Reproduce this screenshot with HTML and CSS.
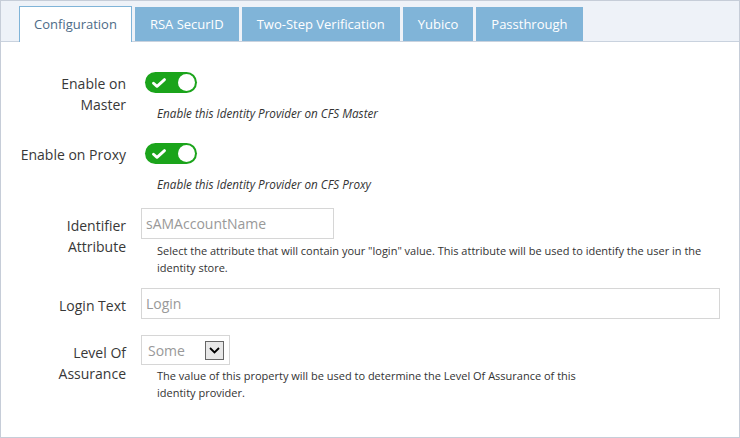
FILE: index.html
```html
<!DOCTYPE html>
<html lang="en">
<head>
<meta charset="utf-8">
<title>Configuration</title>
<link rel="stylesheet" href="styles.css">
</head>
<body>
<div class="frame">
  <div class="tabs">
    <div class="tab active">Configuration</div>
    <div class="tab">RSA SecurID</div>
    <div class="tab">Two-Step Verification</div>
    <div class="tab">Yubico</div>
    <div class="tab">Passthrough</div>
  </div>
  <div class="form">
    <div class="row row-master">
      <div class="label label-toggle">Enable on Master</div>
      <div class="control">
        <div class="toggle">
          <svg class="check" width="14" height="10" viewBox="0 0 14 10"><path d="M1.5 5.2 L5 8.4 L12.5 1.6" fill="none" stroke="#fff" stroke-width="2.8" stroke-linecap="round" stroke-linejoin="round"/></svg>
          <span class="knob"></span>
        </div>
        <div class="help italic">Enable this Identity Provider on CFS Master</div>
      </div>
    </div>
    <div class="row row-proxy">
      <div class="label label-toggle">Enable on Proxy</div>
      <div class="control">
        <div class="toggle">
          <svg class="check" width="14" height="10" viewBox="0 0 14 10"><path d="M1.5 5.2 L5 8.4 L12.5 1.6" fill="none" stroke="#fff" stroke-width="2.8" stroke-linecap="round" stroke-linejoin="round"/></svg>
          <span class="knob"></span>
        </div>
        <div class="help italic">Enable this Identity Provider on CFS Proxy</div>
      </div>
    </div>
    <div class="row row-ident">
      <div class="label">Identifier Attribute</div>
      <div class="control">
        <div class="input input-short"><span class="placeholder">sAMAccountName</span></div>
        <div class="help desc">Select the attribute that will contain your "login" value. This attribute will be used to identify the user in the identity store.</div>
      </div>
    </div>
    <div class="row row-login">
      <div class="label">Login Text</div>
      <div class="control">
        <div class="input input-wide"><span class="placeholder">Login</span></div>
      </div>
    </div>
    <div class="row row-loa">
      <div class="label">Level Of Assurance</div>
      <div class="control">
        <div class="select">
          <span class="placeholder">Some</span>
          <span class="select-btn"><svg width="11" height="7" viewBox="0 0 11 7"><path d="M1 1 L5.5 5.5 L10 1" fill="none" stroke="#000" stroke-width="1.8"/></svg></span>
        </div>
        <div class="help desc desc-narrow">The value of this property will be used to determine the Level Of Assurance of this identity provider.</div>
      </div>
    </div>
  </div>
</div>
</body>
</html>
```
FILE: styles.css
```css
* { box-sizing: border-box; }
html, body { margin: 0; padding: 0; background: #fff; }
body { font-family: "Open Sans", "Liberation Sans", sans-serif; color: #333; }

.frame {
  width: 740px;
  height: 438px;
  border: 1px solid #c6cdd8;
  background: #fff;
}

.tabs {
  display: flex;
  align-items: flex-end;
  gap: 3px;
  height: 41px;
  padding-left: 18px;
  background: #eef2f8;
  border-bottom: 1px solid #c9d2de;
}

.tab {
  height: 34px;
  line-height: 34px;
  padding: 0 15px;
  font-size: 13px;
  background: #80b4d8;
  color: #fff;
  white-space: nowrap;
}

.tab.active {
  height: 36px;
  line-height: 34px;
  margin-bottom: -1px;
  background: #fff;
  color: #4d6b87;
  border: 1px solid #80b4d8;
  border-bottom: none;
  padding: 0 14px;
}

.form {
  padding: 0 19px 0 16px;
}

.row {
  display: grid;
  grid-template-columns: 109px 1fr;
  column-gap: 15px;
  align-items: start;
}

.row-master { margin-top: 30px; }
.row-proxy { margin-top: 21px; }
.row-ident { margin-top: 15px; }
.row-login { margin-top: 12px; }
.row-loa { margin-top: 16px; }

.label {
  font-size: 14px;
  line-height: 21px;
  text-align: right;
  color: #383838;
  padding-top: 7px;
}
.label.label-toggle { padding-top: 1px; }

.control { min-width: 0; }

.toggle {
  position: relative;
  width: 52px;
  height: 21px;
  margin-left: 4px;
  border-radius: 11px;
  background: #1ba41b;
}
.toggle .check {
  position: absolute;
  left: 7px;
  top: 6px;
}
.toggle .knob {
  position: absolute;
  right: 2px;
  top: 2px;
  width: 17px;
  height: 17px;
  border-radius: 50%;
  background: #fff;
}

.help {
  margin-left: 16px;
  font-size: 11px;
  line-height: 17px;
  color: #333;
}
.help.italic {
  font-style: italic;
  font-size: 11.7px;
  margin-top: 12px;
}
.help.desc { margin-top: 3px; }
.help.desc-narrow { max-width: 440px; margin-top: 2px; }

.input {
  height: 31px;
  border: 1px solid #d6d6d6;
  padding-left: 4px;
  display: flex;
  align-items: center;
  background: #fff;
}
.input-short { width: 193px; }
.input-wide { width: 100%; }

.placeholder {
  font-size: 14px;
  color: #999;
}

.select {
  width: 89px;
  height: 30px;
  border: 1px solid #d6d6d6;
  padding-left: 6px;
  padding-right: 5px;
  display: flex;
  align-items: center;
  justify-content: space-between;
}
.select-btn {
  width: 19px;
  height: 19px;
  border: 1px solid #666;
  background: #e8e8e8;
  display: flex;
  align-items: center;
  justify-content: center;
}
```
